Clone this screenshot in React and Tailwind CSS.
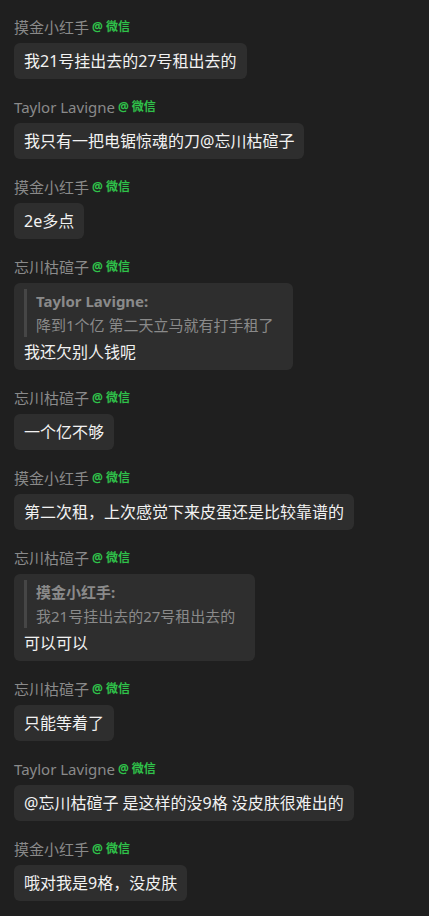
import React from "react";

const messages = [
  { name: "摸金小红手", text: "我21号挂出去的27号租出去的" },
  { name: "Taylor Lavigne", text: "我只有一把电锯惊魂的刀@忘川枯碹子" },
  { name: "摸金小红手", text: "2e多点" },
  {
    name: "忘川枯碹子",
    quote: { name: "Taylor Lavigne:", text: "降到1个亿 第二天立马就有打手租了" },
    text: "我还欠别人钱呢",
  },
  { name: "忘川枯碹子", text: "一个亿不够" },
  { name: "摸金小红手", text: "第二次租，上次感觉下来皮蛋还是比较靠谱的" },
  {
    name: "忘川枯碹子",
    quote: { name: "摸金小红手:", text: "我21号挂出去的27号租出去的" },
    text: "可以可以",
  },
  { name: "忘川枯碹子", text: "只能等着了" },
  { name: "Taylor Lavigne", text: "@忘川枯碹子 是这样的没9格 没皮肤很难出的" },
  { name: "摸金小红手", text: "哦对我是9格，没皮肤" },
];

const Message = ({ msg }) => (
  <div className="mb-[18px]">
    <div className="flex items-center h-5 leading-5">
      <span className="text-[15px] text-[#8a8a8a]">{msg.name}</span>
      <span className="ml-[3px] text-[12px] font-bold text-[#2fc24a]">@ 微信</span>
    </div>
    <div className="mt-[6px] inline-block rounded-md bg-[#2e2e2e] px-[10px] py-[6px]">
      {msg.quote && (
        <div className="mb-[3px] border-l-[3px] border-[#464646] pl-[9px] pr-[10px]">
          <div className="text-[15px] font-bold leading-6 text-[#8a8a8a]">{msg.quote.name}</div>
          <div className="text-[15px] leading-6 text-[#8a8a8a]">{msg.quote.text}</div>
        </div>
      )}
      <div className="text-[16px] leading-6 text-[#f2f2f2]">{msg.text}</div>
    </div>
  </div>
);

export default function App() {
  return (
    <div
      className="min-h-[916px] w-[429px] bg-[#1f1f1f] px-[14px] pt-[17px]"
      style={{ fontFamily: '"Noto Sans", "Noto Sans CJK SC", sans-serif' }}
    >
      {messages.map((m, i) => (
        <Message key={i} msg={m} />
      ))}
    </div>
  );
}
